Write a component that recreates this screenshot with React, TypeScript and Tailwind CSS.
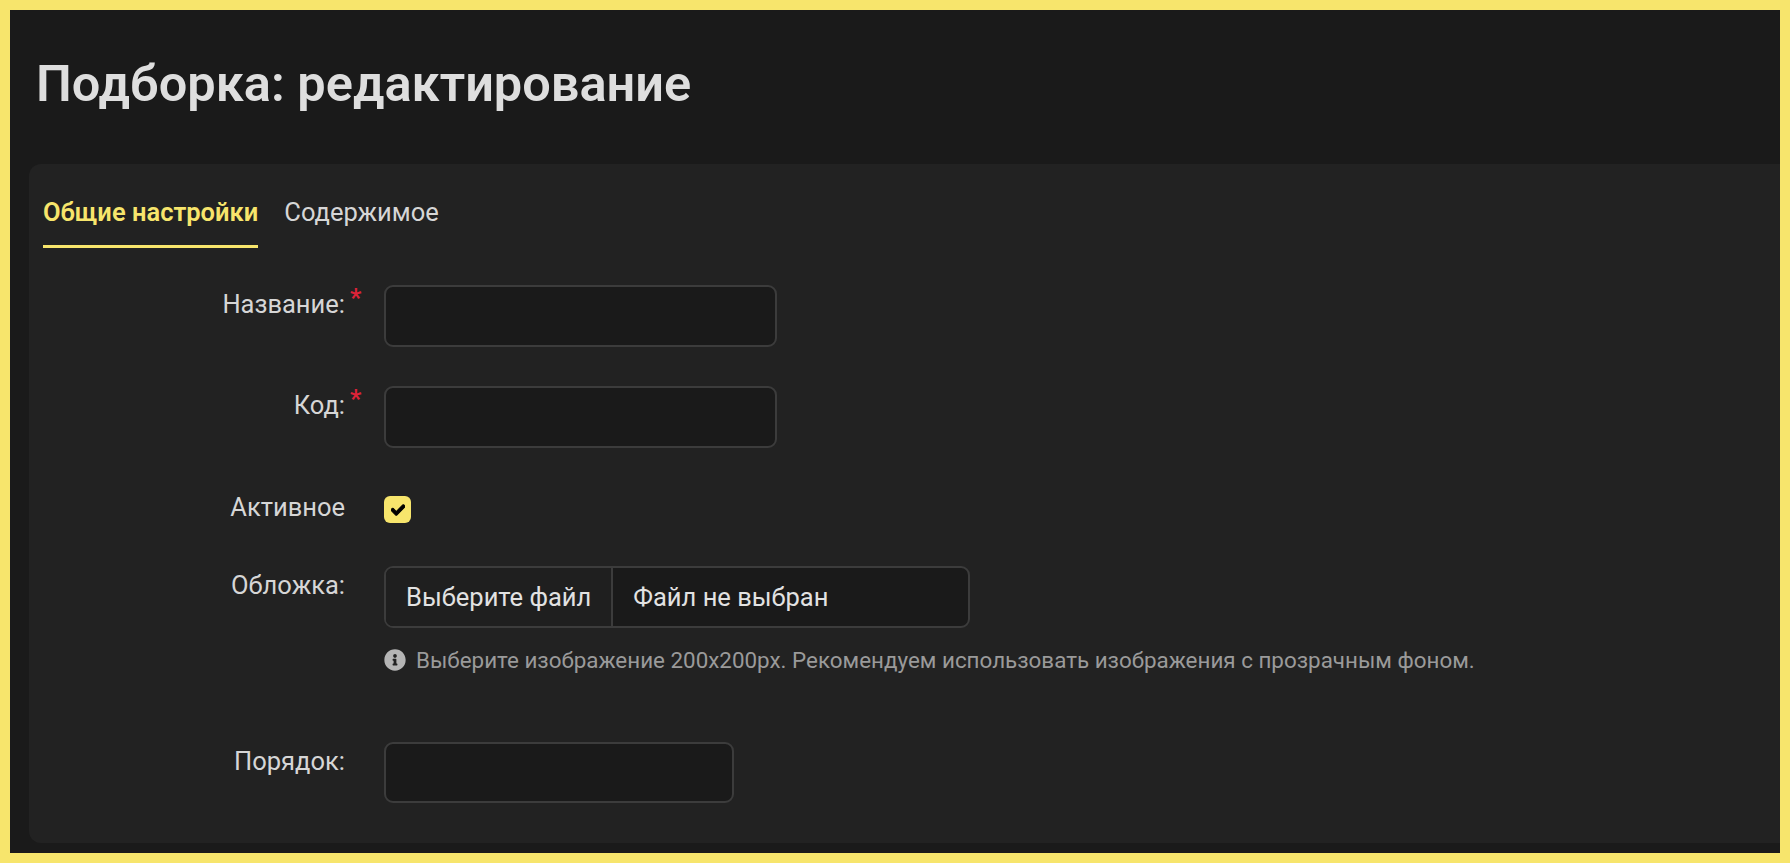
import { FaCheck, FaInfoCircle } from "react-icons/fa";

const font = "font-['Roboto','Noto_Sans',sans-serif]";

function Label({ text, required }: { text: string; required?: boolean }) {
  return (
    <div className="flex w-[341px] shrink-0 justify-end pt-[6px] text-[25.5px] leading-[26px] text-[#d6d6d6]">
      <span>{text}</span>
      <span className={required ? "relative top-[-6px] ml-[5px] w-[34px] font-semibold text-[#dc2338]" : "ml-[5px] w-[34px]"}>
        {required ? "*" : ""}
      </span>
    </div>
  );
}

function Field({ className }: { className: string }) {
  return (
    <input
      type="text"
      className={`${className} rounded-[9px] border-2 border-[#3c3c3c] bg-[#1a1a1a] outline-none`}
    />
  );
}

export default function App() {
  return (
    <div className={`${font} h-[863px] w-[1790px] overflow-hidden border-[10px] border-[#f7e56c] bg-[#1a1a1a]`}>
      <h1 className="pl-[26px] pt-[44px] text-[50.5px] font-semibold leading-[60px] text-[#dedede]">
        Подборка: редактирование
      </h1>
      <div className="ml-[19px] mt-[50px] h-[679px] rounded-l-[12px] bg-[#222222] pl-[14px]">
        <div className="flex gap-[26px] pt-[14px] text-[25.5px] leading-[26px]">
          <div className="border-b-[3px] border-[#f7e56c] pb-[20px] pt-[21px] font-semibold text-[#f7e56c]">Общие настройки</div>
          <div className="pt-[21px] text-[#d6d6d6]">Содержимое</div>
        </div>
        <div className="mt-[37px] flex flex-col">
          <div className="flex">
            <Label text="Название:" required />
            <Field className="h-[62px] w-[393px]" />
          </div>
          <div className="mt-[39px] flex">
            <Label text="Код:" required />
            <Field className="h-[62px] w-[393px]" />
          </div>
          <div className="mt-[48px] flex">
            <div className="flex w-[341px] shrink-0 justify-end text-[25.5px] leading-[22px] text-[#d6d6d6]">
              <span>Активное</span>
              <span className="ml-[5px] w-[34px]" />
            </div>
            <div className="flex h-[27px] w-[27px] items-center justify-center rounded-[6px] bg-[#f7e56c] text-black">
              <FaCheck className="h-[14px] w-[14px]" stroke="currentColor" strokeWidth={40} />
            </div>
          </div>
          <div className="mt-[43px] flex">
            <Label text="Обложка:" />
            <div className="flex flex-col">
              <div className="flex h-[62px] w-[586px] overflow-hidden rounded-[9px] border-2 border-[#3c3c3c] bg-[#1a1a1a] text-[25.5px] text-[#e2e2e2]">
                <div className="flex items-center border-r-2 border-[#3c3c3c] bg-[#1f1f1f] px-[20px]">Выберите файл</div>
                <div className="flex items-center pl-[20px]">Файл не выбран</div>
              </div>
              <div className="mt-[20px] flex items-center gap-[10px] whitespace-nowrap text-[22.4px] leading-[24px] text-[#9a9a9a]">
                <FaInfoCircle className="h-[22px] w-[22px] text-[#b5b5b5]" />
                <span>Выберите изображение 200x200px. Рекомендуем использовать изображения с прозрачным фоном.</span>
              </div>
            </div>
          </div>
          <div className="mt-[70px] flex">
            <Label text="Порядок:" />
            <Field className="h-[61px] w-[350px]" />
          </div>
        </div>
      </div>
    </div>
  );
}
